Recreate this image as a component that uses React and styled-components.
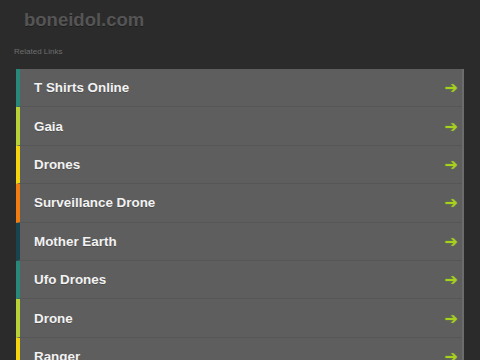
import React from 'react';
import styled, { createGlobalStyle } from 'styled-components';

const Global = createGlobalStyle`
  html, body {
    margin: 0;
    padding: 0;
    background: #2b2b2b;
    font-family: "Liberation Sans", Arial, sans-serif;
  }
`;

const Page = styled.div`
  width: 480px;
  height: 360px;
  overflow: hidden;
  padding: 9px 16px 0 16px;
  box-sizing: border-box;
`;

const Title = styled.h1`
  margin: 0 0 0 8px;
  font-size: 18.5px;
  line-height: 22px;
  font-weight: bold;
  color: #555555;
  text-shadow: 0 1px 0 rgba(0, 0, 0, 0.3);
`;

const Related = styled.div`
  margin: 16px 0 0 -2px;
  font-size: 8px;
  line-height: 10px;
  color: #6e6e6e;
`;

const List = styled.ul`
  list-style: none;
  margin: 12px 0 0 0;
  padding: 0;
  width: 448px;
  border-right: 2px solid #6c6c6c;
  box-sizing: border-box;
`;

const Row = styled.li`
  display: flex;
  align-items: center;
  justify-content: space-between;
  height: 37.4px;
  border-bottom: 1px solid #565656;
  border-left: 4px solid ${p => p.$accent};
  background: #5e5e5e;
  padding: 0 4px 0 14px;
`;

const Label = styled.a`
  color: #f2f2f2;
  font-size: 13.4px;
  font-weight: bold;
  text-decoration: none;
  text-shadow: 0 1px 0 rgba(0, 0, 0, 0.2);
`;

const Arrow = styled.span`
  color: #a6d21e;
  font-family: "DejaVu Sans", sans-serif;
  font-size: 16px;
  font-weight: bold;
  text-shadow: 0 0 2px rgba(166, 210, 30, 0.4);
`;

const links = [
  { title: 'T Shirts Online', color: '#27887a' },
  { title: 'Gaia', color: '#b8d236' },
  { title: 'Drones', color: '#f4d40e' },
  { title: 'Surveillance Drone', color: '#f17d10' },
  { title: 'Mother Earth', color: '#17444f' },
  { title: 'Ufo Drones', color: '#27887a' },
  { title: 'Drone', color: '#b8d236' },
  { title: 'Ranger', color: '#f4d40e' },
];

export default function App() {
  return (
    <Page>
      <Global />
      <Title>boneidol.com</Title>
      <Related>Related Links</Related>
      <List>
        {links.map(l => (
          <Row key={l.title} $accent={l.color}>
            <Label href="#">{l.title}</Label>
            <Arrow>➔</Arrow>
          </Row>
        ))}
      </List>
    </Page>
  );
}
